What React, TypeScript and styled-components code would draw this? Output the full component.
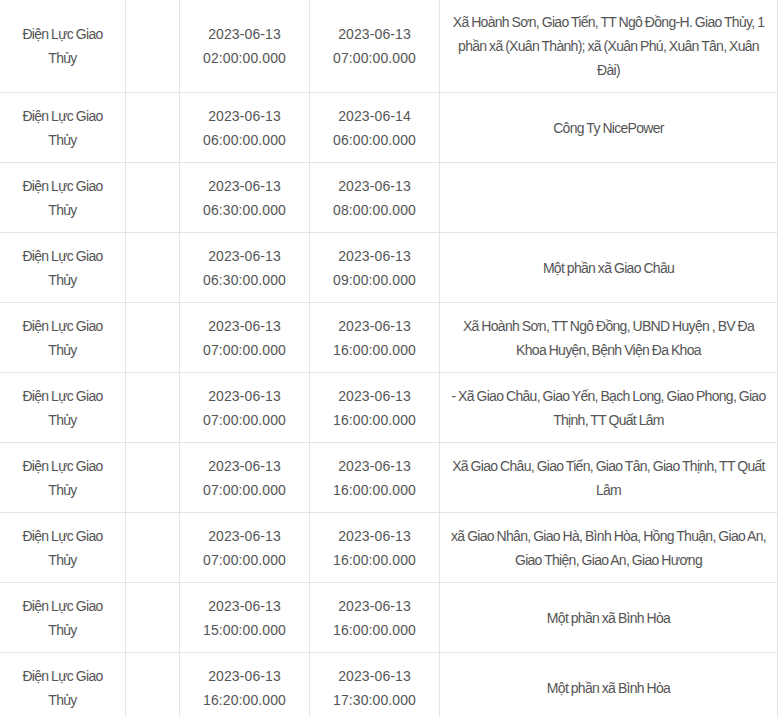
import styled, { createGlobalStyle } from "styled-components";

const GlobalStyle = createGlobalStyle`
  body {
    margin: 0;
    background: #ffffff;
    overflow: hidden;
  }
`;

function App() {
  return (
    <>
      <GlobalStyle />
      <Schedule>
        <colgroup>
          {COLUMN_WIDTHS.map((w, i) => (
            <Col key={i} $width={w} />
          ))}
        </colgroup>
        <tbody>
          {OUTAGE_DATA.map((row) => (
            <Row key={row.id}>
              <Cell>Điện Lực Giao Thủy</Cell>
              <Cell />
              <TimeCell>
                {row.start[0]}
                <br />
                {row.start[1]}
              </TimeCell>
              <TimeCell>
                {row.end[0]}
                <br />
                {row.end[1]}
              </TimeCell>
              <Cell>{row.area}</Cell>
            </Row>
          ))}
        </tbody>
      </Schedule>
    </>
  );
}

export default App;

const COLUMN_WIDTHS = [126, 54, 130, 130, 338];

const Schedule = styled.table`
  border-collapse: collapse;
  table-layout: fixed;
  width: 778px;
  margin: -1px 0 0 -1px;
  font-family: "Liberation Sans", Arial, sans-serif;
  font-size: 14px;
  line-height: 24px;
  color: #555555;
`;

const Col = styled.col<{ $width: number }>`
  width: ${(p) => p.$width}px;
`;

const Row = styled.tr`
  height: 70px;
`;

const Cell = styled.td`
  border: 1px solid #e4e4e4;
  padding: 10px 8px;
  text-align: center;
  vertical-align: middle;
  letter-spacing: -0.7px;
  word-spacing: -0.5px;
`;

const TimeCell = styled(Cell)`
  letter-spacing: 0.1px;
  word-spacing: 0;
`;

interface outageType {
  id: number;
  start: [string, string];
  end: [string, string];
  area: string;
}

const OUTAGE_DATA: outageType[] = [
  {
    id: 1,
    start: ["2023-06-13", "02:00:00.000"],
    end: ["2023-06-13", "07:00:00.000"],
    area: "Xã Hoành Sơn, Giao Tiến, TT Ngô Đồng-H. Giao Thủy, 1 phần xã (Xuân Thành); xã (Xuân Phú, Xuân Tân, Xuân Đài)",
  },
  {
    id: 2,
    start: ["2023-06-13", "06:00:00.000"],
    end: ["2023-06-14", "06:00:00.000"],
    area: "Công Ty NicePower",
  },
  {
    id: 3,
    start: ["2023-06-13", "06:30:00.000"],
    end: ["2023-06-13", "08:00:00.000"],
    area: "",
  },
  {
    id: 4,
    start: ["2023-06-13", "06:30:00.000"],
    end: ["2023-06-13", "09:00:00.000"],
    area: "Một phần xã Giao Châu",
  },
  {
    id: 5,
    start: ["2023-06-13", "07:00:00.000"],
    end: ["2023-06-13", "16:00:00.000"],
    area: "Xã Hoành Sơn, TT Ngô Đồng, UBND Huyện , BV Đa Khoa Huyện, Bệnh Viện Đa Khoa",
  },
  {
    id: 6,
    start: ["2023-06-13", "07:00:00.000"],
    end: ["2023-06-13", "16:00:00.000"],
    area: "- Xã Giao Châu, Giao Yến, Bạch Long, Giao Phong, Giao Thịnh, TT Quất Lâm",
  },
  {
    id: 7,
    start: ["2023-06-13", "07:00:00.000"],
    end: ["2023-06-13", "16:00:00.000"],
    area: "Xã Giao Châu, Giao Tiến, Giao Tân, Giao Thịnh, TT Quất Lâm",
  },
  {
    id: 8,
    start: ["2023-06-13", "07:00:00.000"],
    end: ["2023-06-13", "16:00:00.000"],
    area: "xã Giao Nhân, Giao Hà, Bình Hòa, Hồng Thuận, Giao An, Giao Thiện, Giao An, Giao Hương",
  },
  {
    id: 9,
    start: ["2023-06-13", "15:00:00.000"],
    end: ["2023-06-13", "16:00:00.000"],
    area: "Một phần xã Bình Hòa",
  },
  {
    id: 10,
    start: ["2023-06-13", "16:20:00.000"],
    end: ["2023-06-13", "17:30:00.000"],
    area: "Một phần xã Bình Hòa",
  },
];
